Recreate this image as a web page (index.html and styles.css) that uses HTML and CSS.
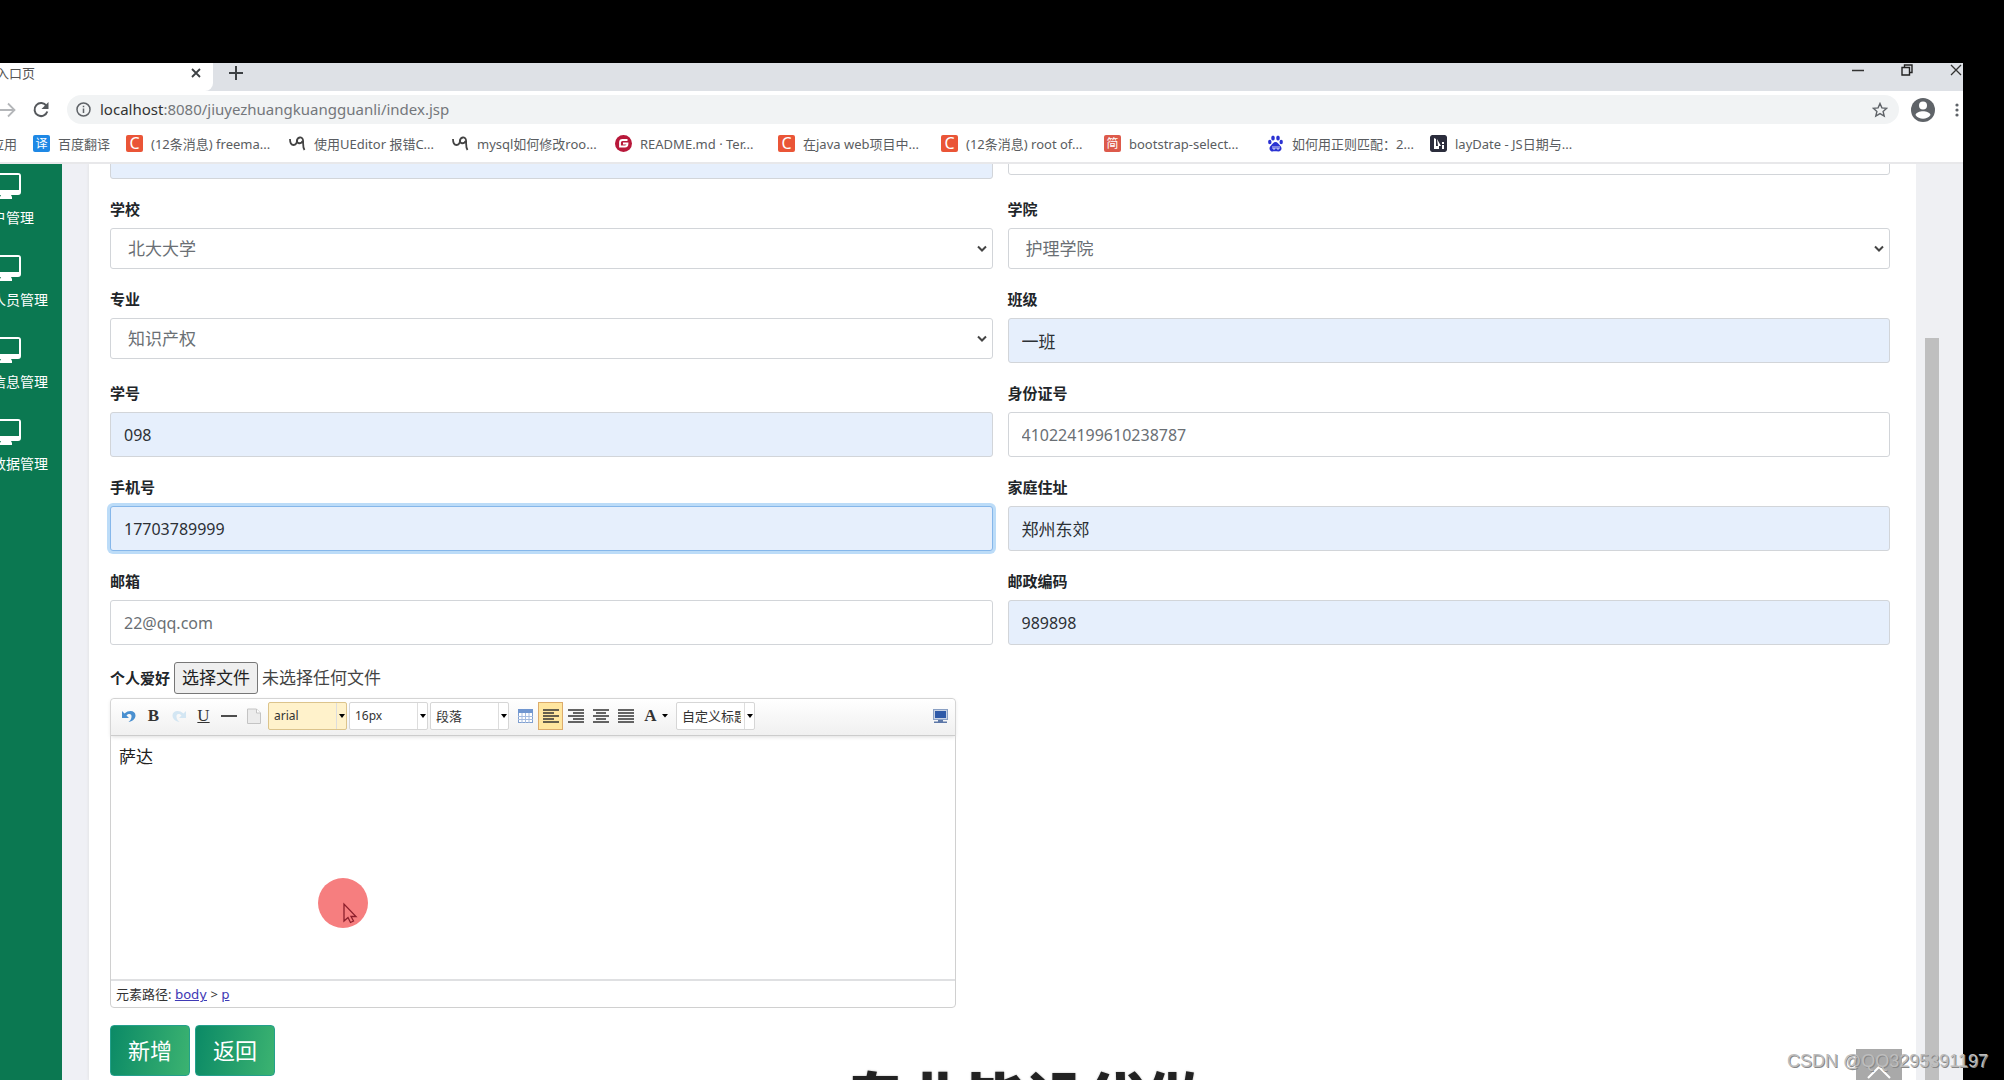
FILE: index.html
```html
<!DOCTYPE html>
<html lang="zh-CN">
<head>
<meta charset="utf-8">
<title>入口页</title>
<link rel="stylesheet" href="styles.css">
</head>
<body>
<div class="browser">
  <header class="tabstrip">
    <div class="tab">
      <span class="tab-title">入口页</span>
      <button class="plain" aria-label="关闭标签页"><svg width="10" height="10" viewBox="0 0 10 10"><path d="M1 1l8 8M9 1l-8 8" stroke="#3c4043" stroke-width="1.8"/></svg></button>
    </div>
    <button class="plain new-tab" aria-label="新标签页"><svg width="14" height="14" viewBox="0 0 14 14"><path d="M7 0v14M0 7h14" stroke="#3c4043" stroke-width="2"/></svg></button>
    <div class="window-controls">
      <button class="plain" aria-label="最小化"><svg width="12" height="12" viewBox="0 0 12 12"><path d="M0 6.5h12" stroke="#333" stroke-width="1.5"/></svg></button>
      <button class="plain" aria-label="还原"><svg width="12" height="12" viewBox="0 0 12 12" fill="none" stroke="#222" stroke-width="1.4"><path d="M1 3.500h7.500v7.500H1zM3.500 3V1H11v7.500H9"/></svg></button>
      <button class="plain" aria-label="关闭"><svg width="12" height="12" viewBox="0 0 12 12"><path d="M1 1l10 10M11 1L1 11" stroke="#333" stroke-width="1.3"/></svg></button>
    </div>
  </header>

  <div class="toolbar">
    <button class="plain forward" aria-label="前进"><svg width="16" height="16" viewBox="0 0 16 16" fill="none" stroke="#b4b6b9" stroke-width="1.8"><path d="M0 8h14M8 1.500L14.500 8 8 14.500"/></svg></button>
    <button class="plain reload" aria-label="重新加载"><svg width="18" height="18" viewBox="0 0 18 18"><path d="M14.500 5A6.500 6.500 0 1 0 15.300 10.500" fill="none" stroke="#55585c" stroke-width="2"/><path d="M16.500 1v7h-7z" fill="#55585c"/></svg></button>
    <div class="address">
      <svg width="15" height="15" viewBox="0 0 15 15" fill="none" stroke="#5f6368" stroke-width="1.500"><circle cx="7.500" cy="7.500" r="6.500"/><path d="M7.500 6.500V11M7.500 3.800v1.500"/></svg>
      <span class="url"><b>localhost</b>:8080/jiuyezhuangkuangguanli/index.jsp</span>
      <button class="plain" aria-label="收藏"><svg width="16" height="16" viewBox="0 0 16 16" fill="none" stroke="#5f6368" stroke-width="1.400"><path d="M8 1.500l1.900 4.400 4.800.4-3.600 3.100 1.100 4.700L8 11.600l-4.200 2.500 1.100-4.700L1.300 6.300l4.800-.4z"/></svg></button>
    </div>
    <button class="plain" aria-label="用户"><svg width="24" height="24" viewBox="0 0 24 24"><circle cx="12" cy="12" r="12" fill="#5f6368"/><circle cx="12" cy="7.500" r="4" fill="#fff"/><path d="M4.500 17c1.500-5 13.500-5 15 0-3.500 5-11.500 5-15 0z" fill="#fff"/></svg></button>
    <button class="plain menu" aria-label="菜单"><svg width="4" height="14" viewBox="0 0 4 14" fill="#5f6368"><circle cx="2" cy="2" r="1.600"/><circle cx="2" cy="7" r="1.600"/><circle cx="2" cy="12" r="1.600"/></svg></button>
  </div>

  <nav class="bookmarks">
    <a class="apps" href="#">应用</a>
    <a class="translate" href="#"><span class="fav blue">译</span>百度翻译</a>
    <a href="#"><span class="fav orange">C</span>(12条消息) freema...</a>
    <a href="#"><svg class="fav" viewBox="0 0 17 17" fill="none" stroke="#444" stroke-width="1.800"><path d="M1 4c0 4 1 6 3.500 6S8 8 8 4.500M13.500 6c-1 3-5.500 3-5.500 0 0-4 5.500-5 6-1 .4 4-.5 7 1.500 10"/></svg>使用UEditor 报错C...</a>
    <a href="#"><svg class="fav" viewBox="0 0 17 17" fill="none" stroke="#444" stroke-width="1.800"><path d="M1 4c0 4 1 6 3.500 6S8 8 8 4.500M13.500 6c-1 3-5.500 3-5.500 0 0-4 5.500-5 6-1 .4 4-.5 7 1.500 10"/></svg>mysql如何修改roo...</a>
    <a href="#"><svg class="fav" viewBox="0 0 17 17"><circle cx="8.500" cy="8.500" r="8.500" fill="#b8183a"/><path d="M12.500 5H7.500Q5 5 5 7.500v4h5q2.500 0 2.500-3H8" fill="none" stroke="#fff" stroke-width="1.800"/></svg>README.md · Ter...</a>
    <a href="#"><span class="fav orange">C</span>在java web项目中...</a>
    <a href="#"><span class="fav orange">C</span>(12条消息) root of...</a>
    <a href="#"><span class="fav red">简</span>bootstrap-select...</a>
    <a href="#"><svg class="fav" viewBox="0 0 17 17" fill="#2b32d2"><ellipse cx="6" cy="3" rx="1.800" ry="2.500"/><ellipse cx="11" cy="3" rx="1.800" ry="2.500"/><ellipse cx="2.800" cy="7" rx="1.700" ry="2.300"/><ellipse cx="14.200" cy="7" rx="1.700" ry="2.300"/><path d="M8.500 7c2 0 3 2 4.500 3.500 3 3 1 6-1.500 6-2 0-4-.5-6 0-2.500 0-4.500-3-1.500-6C5.500 9 6.500 7 8.500 7z"/><path d="M6 11v3h2v-3M10 11v3h2v-3" fill="none" stroke="#fff" stroke-width=".8"/></svg>如何用正则匹配：2...</a>
    <a href="#"><svg class="fav" viewBox="0 0 17 17"><rect width="17" height="17" rx="2" fill="#2b2d3c"/><path d="M4 3l2 1v7h3v3H4zM7 4l4 7H8zM12 7h2v2h-2zM12 10h2v4h-2z" fill="#fff"/></svg>layDate - JS日期与...</a>
  </nav>

  <div class="viewport">
    <aside class="sidebar">
      <a href="#"><svg width="30" height="26" viewBox="0 0 30 26"><path d="M3 0h24a3 3 0 0 1 3 3v16a3 3 0 0 1-3 3h-7l1 2v2H9v-2l1-2H3a3 3 0 0 1-3-3V3a3 3 0 0 1 3-3zM2 2v15h26V2z" fill="#fff" fill-rule="evenodd"/></svg><span>用户管理</span></a>
      <a class="cut" href="#"><svg width="30" height="26" viewBox="0 0 30 26"><path d="M3 0h24a3 3 0 0 1 3 3v16a3 3 0 0 1-3 3h-7l1 2v2H9v-2l1-2H3a3 3 0 0 1-3-3V3a3 3 0 0 1 3-3zM2 2v15h26V2z" fill="#fff" fill-rule="evenodd"/></svg><span>人员管理</span></a>
      <a class="cut" href="#"><svg width="30" height="26" viewBox="0 0 30 26"><path d="M3 0h24a3 3 0 0 1 3 3v16a3 3 0 0 1-3 3h-7l1 2v2H9v-2l1-2H3a3 3 0 0 1-3-3V3a3 3 0 0 1 3-3zM2 2v15h26V2z" fill="#fff" fill-rule="evenodd"/></svg><span>信息管理</span></a>
      <a class="cut" href="#"><svg width="30" height="26" viewBox="0 0 30 26"><path d="M3 0h24a3 3 0 0 1 3 3v16a3 3 0 0 1-3 3h-7l1 2v2H9v-2l1-2H3a3 3 0 0 1-3-3V3a3 3 0 0 1 3-3zM2 2v15h26V2z" fill="#fff" fill-rule="evenodd"/></svg><span>数据管理</span></a>
    </aside>

    <main class="card">
      <form class="form">
        <div class="grid">
          <div class="field"><input class="filled" type="text" aria-label="姓名"></div>
          <div class="field"><select aria-label="性别"><option></option></select></div>

          <div class="field"><label for="school">学校</label><select id="school"><option>北大大学</option></select></div>
          <div class="field"><label for="college">学院</label><select id="college"><option>护理学院</option></select></div>

          <div class="field"><label for="major">专业</label><select id="major"><option>知识产权</option></select></div>
          <div class="field"><label for="class">班级</label><input class="filled" id="class" type="text" value="一班"></div>

          <div class="field"><label for="number">学号</label><input class="filled digits" id="number" type="text" value="098"></div>
          <div class="field"><label for="idcard">身份证号</label><input class="digits" id="idcard" type="text" value="410224199610238787"></div>

          <div class="field"><label for="phone">手机号</label><input class="filled digits active" id="phone" type="text" value="17703789999"></div>
          <div class="field"><label for="home">家庭住址</label><input class="filled" id="home" type="text" value="郑州东郊"></div>

          <div class="field"><label for="mail">邮箱</label><input class="digits" id="mail" type="text" value="22@qq.com"></div>
          <div class="field"><label for="post">邮政编码</label><input class="filled digits" id="post" type="text" value="989898"></div>
        </div>

        <div class="upload">
          <label for="file">个人爱好</label>
          <button type="button" id="file">选择文件</button>
          <span>未选择任何文件</span>
        </div>

        <section class="editor">
          <div class="tools">
            <button type="button" aria-label="撤销"><svg width="16" height="16" viewBox="0 0 16 16"><path d="M1 3v7h7L5.500 7.500C8 5 11 6 10.500 9c-.2 2-1.500 4-3 5C11 13.500 14.500 11 14.500 7.500 14.500 2.500 8 1.500 3.500 5.500z" fill="#4a90d0"/></svg></button>
            <button type="button" class="glyph">B</button>
            <button type="button" aria-label="重做"><svg width="16" height="16" viewBox="0 0 16 16"><path d="M15 3v7H8l2.500-2.500C8 5 5 6 5.500 9c.2 2 1.500 4 3 5C5 13.500 1.500 11 1.500 7.500 1.500 2.500 8 1.500 12.500 5.500z" fill="#d3e6f3"/></svg></button>
            <button type="button" class="glyph underline">U</button>
            <button type="button" aria-label="分隔线"><svg width="16" height="16" viewBox="0 0 16 16"><path d="M0 8h16" stroke="#222" stroke-width="1.600"/></svg></button>
            <button type="button" aria-label="清空文档"><svg width="14" height="16" viewBox="0 0 14 16"><path d="M.5 1h9l4 4v10.500H.5z" fill="#ececec" stroke="#c4c4c4"/><path d="M9.500 1v4h4" fill="#fff" stroke="#c4c4c4"/></svg></button>
            <select class="hover latin" aria-label="字体"><option>arial</option></select>
            <select class="latin" aria-label="字号"><option>16px</option></select>
            <select aria-label="段落格式"><option>段落</option></select>
            <button type="button" class="table" aria-label="表格"><svg width="15" height="14" viewBox="0 0 15 14"><rect x=".5" y=".5" width="14" height="13" fill="#fff" stroke="#7f9fd0"/><rect width="15" height="4" fill="#7096d0"/><path d="M4 4v10M7.500 4v10M11 4v10M0 7.500h15M0 10.500h15" stroke="#a5bce0"/></svg></button>
            <button type="button" class="on" aria-label="居左"><svg width="16" height="14" viewBox="0 0 16 14"><path d="M0 1h16M0 4h11M0 7h16M0 10h11M0 13h16" stroke="#333" stroke-width="1.400"/></svg></button>
            <button type="button" aria-label="居右"><svg width="16" height="14" viewBox="0 0 16 14"><path d="M0 1h16M5 4h11M0 7h16M5 10h11M0 13h16" stroke="#333" stroke-width="1.400"/></svg></button>
            <button type="button" aria-label="居中"><svg width="16" height="14" viewBox="0 0 16 14"><path d="M0 1h16M3 4h10M0 7h16M3 10h10M0 13h16" stroke="#333" stroke-width="1.400"/></svg></button>
            <button type="button" aria-label="两端对齐"><svg width="16" height="14" viewBox="0 0 16 14"><path d="M0 1h16M0 4h16M0 7h16M0 10h16M0 13h16" stroke="#333" stroke-width="1.400"/></svg></button>
            <button type="button" class="glyph color">A<svg width="6" height="4" viewBox="0 0 6 4"><path d="M0 0h6L3 3.500z" fill="#000"/></svg></button>
            <select aria-label="自定义标题"><option>自定义标题</option></select>
            <button type="button" class="full" aria-label="全屏"><svg width="15" height="14" viewBox="0 0 15 14"><rect x=".5" y=".5" width="14" height="10" fill="#c9d3e4" stroke="#8aa0c4"/><rect x="2" y="2" width="11" height="7" fill="#2f5aa8"/><path d="M5 11h5v1.500H5zM1 12.500h13V14H1z" fill="#5d78a8"/></svg></button>
          </div>
          <div class="content" contenteditable="true" role="textbox" aria-label="内容"><p>萨达</p>
            <svg class="pointer" width="50" height="50" viewBox="0 0 50 50"><circle cx="25" cy="25" r="25" fill="#f67e7f"/><path d="M26 26v17l4-3.500 2.500 5 3-1.500-2.500-4.500h5z" fill="#f67e7f" stroke="#8c1f2c" stroke-width="1.300"/></svg>
          </div>
          <div class="path">元素路径: <a href="#">body</a> &gt; <a href="#">p</a></div>
        </section>

        <div class="actions">
          <button type="button">新增</button>
          <button type="button">返回</button>
        </div>
      </form>
    </main>
    <div class="gutter"><div class="thumb"></div></div>
  </div>
</div>
<button class="to-top" aria-label="返回顶部"><svg width="24" height="14" viewBox="0 0 24 14"><path d="M1 13L12 2l11 11" fill="none" stroke="#fff" stroke-width="2"/></svg></button>
<div class="caption">专业毕设代做</div>
<div class="watermark">CSDN @QQ3295391197</div>
</body>
</html>
```
FILE: styles.css
```css
* { box-sizing: border-box; }

body {
  margin: 0;
  height: 100vh;
  padding: 63px 41px 0 0;
  overflow: hidden;
  position: relative;
  background: #000;
  color: #222;
  font-family: "Noto Sans", "Noto Sans CJK SC", sans-serif;
  font-size: 16px;
}

button, input, select { font-family: inherit; margin: 0; }
a { color: inherit; text-decoration: none; }
svg { display: block; flex: none; }

.plain {
  display: flex;
  padding: 0;
  border: 0;
  background: none;
}

.browser {
  height: 100%;
  display: flex;
  flex-direction: column;
  overflow: hidden;
  background: #fff;
}

/* Tab strip */
.tabstrip {
  flex: none;
  height: 28px;
  display: flex;
  background: #dee1e6;
}
.tab {
  width: 213px;
  display: flex;
  justify-content: space-between;
  align-items: center;
  padding: 0 12px 8px 0;
  background: #fff;
  border-radius: 0 0 8px 0;
}
.tab-title {
  margin-left: -4px;
  font-size: 13px;
  line-height: 20px;
  color: #555;
}
.new-tab { padding: 3px 16px; }
.window-controls {
  margin-left: auto;
  display: flex;
  gap: 37px;
  padding: 1px 1px 0 0;
}

/* Address bar */
.toolbar {
  flex: none;
  display: flex;
  align-items: center;
  height: 37px;
  padding-right: 4px;
}
.reload { margin: 0 17px 0 16px; }
.address {
  flex: 1;
  display: flex;
  align-items: center;
  gap: 9px;
  height: 29px;
  padding: 0 11px 0 9px;
  margin-right: 12px;
  border-radius: 15px;
  background: #f1f3f4;
}
.url {
  flex: 1;
  padding-bottom: 2px;
  font-size: 15px;
  color: #74777b;
}
.url b { font-weight: 400; color: #333; }
.menu { margin-left: 20px; }

/* Bookmarks */
.bookmarks {
  flex: none;
  display: flex;
  align-items: center;
  height: 36px;
  padding-bottom: 3px;
  border-bottom: 2px solid #e8e8ea;
  font-size: 13px;
  color: #5a5d61;
}
.bookmarks a {
  flex: 0 0 163px;
  display: flex;
  align-items: center;
  gap: 8px;
  white-space: nowrap;
}
.bookmarks .apps { flex-basis: 33px; margin-left: -9px; margin-right: 9px; }
.bookmarks .translate { flex-basis: 93px; }
.fav {
  width: 17px;
  height: 17px;
  flex: none;
  border-radius: 2px;
  color: #fff;
  font-size: 12px;
  line-height: 17px;
  text-align: center;
}
.blue { background: #1e88e5; }
.orange { background: #ea5537; font-size: 16px; }
.red { background: #dd5a4b; }

/* Page */
.viewport {
  flex: 1;
  min-height: 0;
  display: flex;
  overflow: hidden;
  background: #eff0f5;
}
.sidebar {
  flex: none;
  width: 62px;
  padding-top: 9px;
  overflow: hidden;
  background: #0b7851;
  color: #fff;
  font-size: 14px;
}
.sidebar a {
  width: 112px;
  height: 82px;
  margin-left: -50px;
  display: flex;
  flex-direction: column;
  align-items: center;
  gap: 9px;
}
.sidebar span { line-height: 20px; }
.sidebar .cut span { padding-left: 28px; }

.card {
  flex: 1;
  min-width: 0;
  margin-left: 27px;
  padding: 0 26px 0 21px;
  background: #fff;
  box-shadow: 0 0 3px #ddd;
}
.form { margin-top: -30px; }
.grid {
  display: grid;
  grid-template-columns: 1fr 1fr;
  column-gap: 15px;
  row-gap: 18px;
}
.field {
  display: flex;
  flex-direction: column;
  align-items: stretch;
}
.field label, .upload label {
  font-size: 15px;
  line-height: 24px;
  font-weight: 700;
  color: #212529;
}
.field label { margin-bottom: 7px; }
.field input, .field select {
  width: 100%;
  height: 45px;
  padding: 0 13px;
  border: 1px solid #d2d5d9;
  border-radius: 3px;
  outline: 0;
  background: #fff;
  color: #6a6f74;
  font-size: 17px;
}
.field select {
  height: 41px;
  padding: 0 17px;
  appearance: none;
  background: #fff url("data:image/svg+xml,%3Csvg xmlns='http://www.w3.org/2000/svg' width='10' height='8'%3E%3Cpath d='M1 1.500l4 4 4-4' fill='none' stroke='%23444' stroke-width='2'/%3E%3C/svg%3E") no-repeat right 5px center;
}
.field input.digits { font-size: 16px; }
.field input.filled { background: #e6effc; color: #2c3035; }
.field input.active {
  border-color: #86b7ea;
  box-shadow: 0 0 0 3px #bcdcf8;
}

.upload {
  display: flex;
  align-items: center;
  gap: 4px;
  margin-top: 17px;
  font-size: 17px;
  line-height: 24px;
  color: #444;
}
.upload button {
  height: 32px;
  padding: 0 7px;
  border: 1px solid #777;
  border-radius: 3px;
  background: #efefef;
  color: #222;
  font-size: 17px;
  line-height: 28px;
}

/* Rich text editor */
.editor {
  width: 47.5%;
  min-width: 700px;
  margin-top: 4px;
  border: 1px solid #d0d0d0;
  border-radius: 4px;
}
.tools {
  display: flex;
  align-items: center;
  height: 37px;
  padding: 0 2px 3px 5px;
  border-bottom: 1px solid #ccc;
  border-radius: 4px 4px 0 0;
  background: linear-gradient(#fff, #f0f0f0);
  box-shadow: 0 1px 4px #ddd;
}
.tools button {
  flex: none;
  width: 25px;
  height: 28px;
  padding: 0;
  display: flex;
  align-items: center;
  justify-content: center;
  border: 1px solid transparent;
  background: none;
}
.tools .glyph {
  font: 700 17px "Liberation Serif", serif;
  color: #333;
}
.tools .underline { font-weight: 400; text-decoration: underline; }
.tools .color { width: 36px; gap: 5px; }
.tools .table { margin-left: 4px; }
.tools .on { background: #ffe69f; border-color: #dcac6c; }
.tools .full { margin-left: auto; }
.tools select {
  flex: none;
  width: 79px;
  height: 28px;
  margin-left: 2px;
  padding: 0 13px 0 5px;
  border: 1px solid #d6d6d6;
  border-radius: 2px;
  appearance: none;
  font-size: 13px;
  color: #333;
  background: #fff url("data:image/svg+xml,%3Csvg xmlns='http://www.w3.org/2000/svg' width='10' height='26'%3E%3Cpath d='M.5 0v26' stroke='%23ddd'/%3E%3Cpath d='M3 11h6l-3 4z'/%3E%3C/svg%3E") no-repeat right center;
}
.tools .latin { font-size: 12px; }
.tools .hover { background-color: #fff2cb; border-color: #dcc48c; }
.content {
  position: relative;
  height: 245px;
  padding: 8px;
  border-bottom: 2px solid #dfe0e2;
  font-size: 17px;
  line-height: 25px;
  color: #222;
}
.content p { margin: 0; }
.pointer { position: absolute; left: 207px; top: 142px; }
.path {
  height: 26px;
  padding-left: 5px;
  font-size: 13px;
  line-height: 26px;
  color: #333;
}
.path a {
  font-family: "DejaVu Sans", sans-serif;
  color: #3f3ab5;
  text-decoration: underline;
}

.actions {
  display: flex;
  gap: 5px;
  margin-top: 17px;
}
.actions button {
  width: 80px;
  height: 51px;
  padding: 0 0 3px;
  border: 1px solid #24a08c;
  border-radius: 4px;
  background: linear-gradient(100deg, #0b8a66, #3cb371);
  color: #fff;
  font-size: 22px;
}

.gutter { flex: none; width: 47px; padding-left: 9px; background: #eff0f3; }
.thumb { width: 14px; height: 100%; margin-top: 174px; background: #bfbfbf; }

/* Overlays */
.to-top {
  position: absolute;
  right: 102px;
  bottom: -15px;
  width: 46px;
  height: 46px;
  display: flex;
  align-items: center;
  justify-content: center;
  border: 0;
  background: #a9a9a9;
}
.caption {
  position: absolute;
  left: 0;
  right: 0;
  top: calc(100vh - 10px);
  padding-left: 46px;
  font-size: 60px;
  line-height: 60px;
  font-weight: 900;
  text-align: center;
  color: #222;
  text-shadow: 0 0 2px #aaa;
}
.watermark {
  position: absolute;
  right: 16px;
  bottom: 8px;
  font: 18px/22px "Liberation Sans", sans-serif;
  color: #bdbdbd;
  text-shadow: 1px 1px 0 #888;
}
```
